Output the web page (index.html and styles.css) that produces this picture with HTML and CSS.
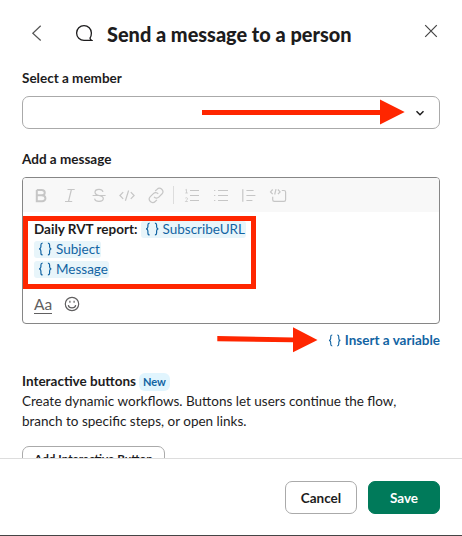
FILE: index.html
```html
<!DOCTYPE html>
<html lang="en">
<head>
<meta charset="utf-8">
<title>Send a message to a person</title>
<link rel="stylesheet" href="styles.css">
</head>
<body>
<svg class="defs" width="0" height="0">
  <symbol id="braces" viewBox="0 0 14 14"><path d="M4.600 1.100C3.200 1.100 2.900 1.900 2.900 3v1.800C2.900 6 2.400 6.600 1.200 6.900 2.400 7.200 2.900 7.900 2.900 9v1.900c0 1.200.2 2 1.700 2M9.900 1.100c1.500 0 1.700.8 1.700 1.900v1.800c0 1.200.4 1.800 1.600 2.100-1.200.3-1.600 1-1.600 2.100v1.900c0 1.200-.2 2-1.700 2"/></symbol>
</svg>
<div class="dialog">
  <header class="header">
    <svg class="back" viewBox="0 0 12 18"><path d="M9.700 1.800 1.800 9.200l7.900 7.300"/></svg>
    <svg class="bubble" viewBox="0 0 18 18"><path d="M15 14.200c.9-1.400 1.400-3.200 1.400-5.200A7.400 7.400 0 1 0 9 16.400h7.500c-.8-.5-1.300-1.200-1.500-2.200Z"/></svg>
    <h1>Send a message to a person</h1>
    <svg class="close" viewBox="0 0 14 14"><path d="m1.200 1.200 11.600 11.600M12.800 1.200 1.200 12.800"/></svg>
  </header>
  <main class="content">
    <h2 class="label">Select a member</h2>
    <div class="select"><svg viewBox="0 0 10 8"><path d="m1.500 2.200 3.500 3.500 3.500-3.500"/></svg></div>
    <h2 class="label message-label">Add a message</h2>
    <div class="editor">
      <div class="toolbar">
        <svg viewBox="0 0 18 18"><path class="heavy" d="M4.800 4h4.800c4.200 0 4.200 5.300 0 5.300H4.800M4.800 4v11.200h5.300c4.500 0 4.500-5.900-.5-5.900"/></svg>
        <svg viewBox="0 0 18 18"><path d="M6.500 3.500h7.200M4 15.500h7.200M10.400 3.500 7.500 15.500"/></svg>
        <svg viewBox="0 0 18 18"><path d="M2.600 9.500h13M13 5.900C12.600 4.300 11.200 3.400 9 3.400 6.500 3.400 5 4.600 5 6.200c0 1.800 1.500 2.700 4 3.300 2.600.5 4.300 1.200 4.300 3 0 1.700-1.700 2.800-4.300 2.800-2.500 0-4-.9-4.400-2.700"/></svg>
        <svg viewBox="0 0 18 18"><path d="m5.200 6.100-3.300 3.400 3.300 3.300M12.800 6.100l3.300 3.400-3.300 3.300M10.600 4.500 7.400 14.700"/></svg>
        <svg viewBox="0 0 18 18"><path d="M8.200 5 10 3.400a3.300 3.300 0 0 1 4.900 4.600l-3.100 3.100a3.200 3.200 0 0 1-4.800-.3M9.900 13.900l-1.700 1.600A3.400 3.400 0 0 1 3.300 10.700l3.100-3.100a3.200 3.200 0 0 1 4.800.3"/></svg>
        <span class="divider"></span>
        <svg viewBox="0 0 18 18"><path d="M7 4.500h9M7 9.500h9M7 14.500h9"/><path class="fine" d="M2.300 4 3.500 3.400V7M2.300 7h2.500M2.300 12.300c.5-1 2.400-.8 2.200.5-.1 1-1.600 1.900-2.100 2.700h2.400"/></svg>
        <svg viewBox="0 0 18 18"><path d="M6 4.500h10M6 9.500h10M6 14.500h10M2.100 4.500h1.200M2.100 9.500h1.200M2.100 14.500h1.200"/></svg>
        <svg viewBox="0 0 18 18"><path d="M2.800 3.200v12.500M6.400 4.500h7.200M6.400 9.500h9M6.400 14.500h6"/></svg>
        <svg viewBox="0 0 18 18"><path d="M3.700 3.500 1.500 5.900l2.200 2.300M8.900 3.500l2.200 2.400-2.200 2.300M7 3.100 5.700 8.500M12.800 4.500H15q1.600 0 1.600 1.600v7.600q0 1.600-1.600 1.600H5.300q-1.600 0-1.600-1.600v-3"/></svg>
      </div>
      <div class="text">
        <p><b>Daily RVT report:</b> <span class="chip c1"><svg><use href="#braces"/></svg>SubscribeURL</span></p>
        <p><span class="chip"><svg><use href="#braces"/></svg>Subject</span></p>
        <p><span class="chip"><svg><use href="#braces"/></svg>Message</span></p>
      </div>
      <div class="tools">
        <span class="format">Aa</span>
        <svg viewBox="0 0 16 16"><circle cx="8" cy="8" r="6.700"/><path d="M5.900 4.700v2M10.100 4.700v2M4.300 9.200c.6 3.600 6.800 3.600 7.400 0"/></svg>
      </div>
    </div>
    <div class="insert"><svg><use href="#braces"/></svg><span>Insert a variable</span></div>
    <section class="interactive">
      <div class="heading"><h2>Interactive buttons</h2><span class="new">New</span></div>
      <p>Create dynamic workflows. Buttons let users continue the flow,<br>branch to specific steps, or open links.</p>
      <button class="add">Add Interactive Button</button>
    </section>
  </main>
  <footer class="footer"><button>Cancel</button><button class="save">Save</button></footer>
  <svg class="annotations" viewBox="0 0 462 536">
    <path d="M202 110h178v-10.500l24.700 12.500L380 124.500V115H202ZM217.300 336l75.700 1.500v-10.200l24.500 12.700L293 352.300v-10.100l-75.700-1Z"/>
    <rect x="25.500" y="218.500" width="228" height="68"/>
  </svg>
</div>
</body>
</html>
```
FILE: styles.css
```css
* { box-sizing: border-box; }
body { margin: 0; background: #fff; color: #1d1c1d; font: 13.5px/20px Lato, "Liberation Sans", sans-serif; }
h1, h2, p { margin: 0; }
svg { display: block; flex: none; fill: none; stroke: currentColor; stroke-width: 1.2; }
.defs { position: absolute; }
.dialog { position: relative; height: 536px; display: flex; flex-direction: column; overflow: hidden; border-bottom: 1px solid #454545; }
.header { flex: none; height: 68px; padding: 23px 24px 0 31px; display: flex; align-items: flex-start; }
.back { width: 12px; height: 18px; color: #555; margin-top: 1px; }
.bubble { width: 18px; height: 18px; margin: 1px 0 0 32px; stroke-width: 1.3; }
h1 { margin: -1px 0 0 14px; font-size: 19.9px; line-height: 24px; font-weight: 900; white-space: nowrap; }
.close { width: 14px; height: 14px; margin: 1px 0 0 auto; color: #444; }
.content { flex: 1; min-height: 0; overflow: hidden; padding: 0 22px; }
h2 { font-size: 13.5px; line-height: 20px; font-weight: 700; }
.select { height: 33px; margin-top: 8px; border: 1px solid #aaa; border-radius: 7px; display: flex; align-items: center; justify-content: flex-end; padding-right: 14px; }
.select svg { width: 10px; height: 8px; stroke-width: 1.5; }
.message-label { margin-top: 20px; }
.editor { height: 147px; margin-top: 8px; border: 1px solid #868686; border-radius: 4px; overflow: hidden; }
.toolbar { height: 34px; padding: 0 0 0 9px; display: flex; align-items: center; gap: 10.8px; background: #f8f8f8; color: #c6c6c6; }
.toolbar svg { width: 18px; height: 18px; }
.toolbar .heavy { stroke-width: 2; }
.toolbar .fine { stroke-width: .8; }
.divider { width: 1px; height: 18px; background: #ddd; margin: 0 -2.5px; }
.text { padding: 7px 11px 0; height: 73px; white-space: nowrap; }
.text p { height: 20px; display: flex; align-items: center; }
.chip { display: flex; align-items: center; height: 17px; padding: 0 1px 0 4px; border-radius: 3px; background: #e8f5fa; color: #1264a3; }
.chip svg { width: 14px; height: 14px; margin-right: 4px; }
.c1 { margin-left: 3px; }
.tools { display: flex; align-items: center; gap: 12px; padding: 10px 11px 0; color: #616061; }
.format { font-size: 15.5px; line-height: 18px; height: 19px; width: 18px; border-bottom: 1.5px solid; }
.tools svg { width: 16px; height: 16px; margin-top: -2px; }
.insert { display: flex; justify-content: flex-end; align-items: center; gap: 4px; height: 20px; margin-top: 6px; color: #1264a3; font-weight: 700; }
.insert svg { width: 13px; height: 13px; }
.interactive { margin-top: 21px; }
.heading { display: flex; align-items: center; height: 20px; }
.new { margin: 2px 0 0 3px; padding: 0 4px; border-radius: 6px; height: 18px; line-height: 18px; font-size: 11px; font-weight: 700; background: #e1f5fe; color: #1264a3; }
.interactive p { white-space: nowrap; }
button { height: 33px; width: 72px; padding: 0; border: 1px solid #aaa; border-radius: 7px; background: #fff; color: #1d1c1d; font: 700 13.5px/20px Lato, sans-serif; }
.interactive .add { width: 143px; height: 26px; margin-top: 15px; padding-bottom: 3px; font-size: 11.7px; white-space: nowrap; }
.footer { flex: none; height: 77px; border-top: 1px solid #ddd; display: flex; justify-content: flex-end; gap: 11px; padding: 22px 22px 0; }
.footer .save { color: #fff; background: #007a5a; border-color: #007a5a; }
.annotations { position: absolute; inset: 0; width: 462px; height: 536px; pointer-events: none; }
.annotations path { fill: #ff2600; stroke: none; }
.annotations rect { stroke: #ff2600; stroke-width: 5; }
```
